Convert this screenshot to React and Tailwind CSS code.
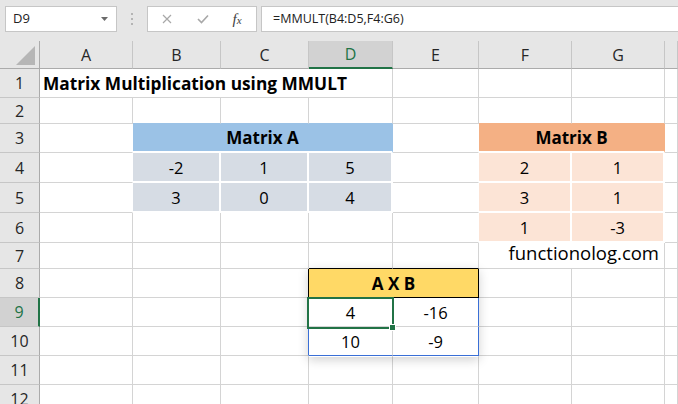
import React from "react";
import { twMerge } from "tailwind-merge";

// column widths include the right gridline
const W = {
  A: "w-[93px]",
  B: "w-[88px]",
  C: "w-[88px]",
  D: "w-[84px]",
  E: "w-[86px]",
  F: "w-[93px]",
  G: "w-[93px]",
  H: "flex-1",
};

const cellFont = "font-['Open_Sans',sans-serif]";

export default function App() {
  return (
    <div className="w-[678px] h-[404px] overflow-hidden bg-white text-black font-['Open_Sans',sans-serif] select-none">
      <FormulaBar />

      <div className="relative">
        <ColumnHeader />

        <Row h="h-[29px]" n={1}>
          <Cell className="w-[353px] items-center justify-start pl-[3px] pt-[1px] font-bold text-[17.3px]">
            Matrix Multiplication using MMULT
          </Cell>
          {blank("EFGH")}
        </Row>

        <Row h="h-[26px]" n={2}>
          {blank("ABCDEFGH", { B: "border-b-[#9bc2e6]", C: "border-b-[#9bc2e6]", D: "border-b-[#9bc2e6]", F: "border-b-[#f4b084]", G: "border-b-[#f4b084]" })}
        </Row>

        <Row h="h-[29px]" n={3}>
          <Cell className="w-[93px] border-r-white" />
          <Cell className="w-[260px] items-center bg-[#9bc2e6] border-r-[#9bc2e6] border-b-white border-b-2 font-bold text-[17px] pt-[1px]">
            Matrix A
          </Cell>
          <Cell className="w-[86px] border-r-white" />
          <Cell className="w-[186px] items-center bg-[#f4b084] border-r-[#f4b084] border-b-white border-b-2 font-bold text-[17px] pt-[1px]">
            Matrix B
          </Cell>
          <Cell className="flex-1" />
        </Row>

        <Row h="h-[30px]" n={4}>
          <Cell className="w-[93px] border-r-white" />
          <Num w="B" v="-2" tone="a" />
          <Num w="C" v="1" tone="a" />
          <Num w="D" v="5" tone="a" />
          <Cell className="w-[86px] border-r-white" />
          <Num w="F" v="2" tone="b" />
          <Num w="G" v="1" tone="b" />
          <Cell className="flex-1" />
        </Row>

        <Row h="h-[30px]" n={5}>
          <Cell className="w-[93px] border-r-white" />
          <Num w="B" v="3" tone="a" />
          <Num w="C" v="0" tone="a" />
          <Num w="D" v="4" tone="a" />
          <Cell className="w-[86px] border-r-white" />
          <Num w="F" v="3" tone="b" />
          <Num w="G" v="1" tone="b" />
          <Cell className="flex-1" />
        </Row>

        <Row h="h-[30px]" n={6}>
          {blank("ABCD")}
          <Cell className="w-[86px] border-r-white" />
          <Num w="F" v="1" tone="b" />
          <Num w="G" v="-3" tone="b" />
          <Cell className="flex-1" />
        </Row>

        <Row h="h-[26px]" n={7}>
          {blank("ABC")}
          <Cell className="w-[84px] border-b-black" />
          <Cell className="w-[86px] border-b-black" />
          <Cell className="w-[186px] justify-end pr-[5px] pb-[1px] text-[18.5px]">functionolog.com</Cell>
          <Cell className="flex-1" />
        </Row>

        <Row h="h-[29px]" n={8}>
          {blank("AB")}
          <Cell className="w-[88px] border-r-black" />
          <Cell className="w-[170px] items-center bg-[#ffd966] border-r-black border-b-black font-bold text-[17px] pt-[1px]">
            A X B
          </Cell>
          {blank("FGH")}
        </Row>

        <Row h="h-[29px]" n={9} sel>
          {blank("AB")}
          <Cell className="w-[88px] border-r-[#3a6fd6]" />
          <Cell className="w-[84px] text-[16.5px]">4</Cell>
          <Cell className="w-[86px] border-r-[#3a6fd6] text-[16.5px]">-16</Cell>
          {blank("FGH")}
        </Row>

        <Row h="h-[29px]" n={10}>
          {blank("AB")}
          <Cell className="w-[88px] border-r-[#3a6fd6]" />
          <Cell className="w-[84px] border-b-[#3a6fd6] text-[16.5px]">10</Cell>
          <Cell className="w-[86px] border-r-[#3a6fd6] border-b-[#3a6fd6] text-[16.5px]">-9</Cell>
          {blank("FGH")}
        </Row>

        <Row h="h-[29px]" n={11}>{blank("ABCDEFGH")}</Row>
        <Row h="h-[29px]" n={12}>{blank("ABCDEFGH")}</Row>

        {/* soft shadow round the result block */}
        <div className="pointer-events-none absolute left-[308px] top-[227px] w-[171px] h-[89px] shadow-[0_3px_10px_rgba(0,0,0,0.18)]" />
        {/* active cell D9 */}
        <div className="pointer-events-none absolute left-[307px] top-[256px] w-[87px] h-[32px] border-2 border-[#217346]" />
        <div className="pointer-events-none absolute left-[389px] top-[283px] w-[7px] h-[7px] bg-[#217346] border border-white" />
      </div>
    </div>
  );
}

function FormulaBar() {
  return (
    <div className="h-[41px] bg-[#e6e6e6] flex items-start pt-[6px] pl-[5px] text-[13px] text-[#222] font-['Open_Sans',sans-serif]">
      <div className="w-[112px] h-[26px] shrink-0 bg-white border border-[#c6c6c6] flex items-center justify-between pl-[7px] pr-[8px]">
        <span>D9</span>
        <svg width="7" height="4" viewBox="0 0 7 4">
          <path d="M0 0h7L3.5 4z" fill="#6b6b6b" />
        </svg>
      </div>
      <div className="w-[30px] h-[26px] shrink-0 flex flex-col items-center justify-center gap-[3px]">
        <span className="w-[2px] h-[2px] bg-[#b4b4b4]" />
        <span className="w-[2px] h-[2px] bg-[#b4b4b4]" />
        <span className="w-[2px] h-[2px] bg-[#b4b4b4]" />
      </div>
      <div className="w-[110px] h-[26px] shrink-0 bg-white border border-[#c6c6c6] flex items-center">
        <div className="w-[38px] flex justify-center">
          <svg width="10" height="10" viewBox="0 0 10 10" stroke="#a8a8a8" strokeWidth="1.2">
            <path d="M1 1l8 8M9 1l-8 8" />
          </svg>
        </div>
        <div className="w-[34px] flex justify-center">
          <svg width="12" height="10" viewBox="0 0 12 10" fill="none" stroke="#a8a8a8" strokeWidth="1.6">
            <path d="M1 5l3.5 3.5L11 1.5" />
          </svg>
        </div>
        <div className="w-[34px] flex justify-center">
          <span className="italic font-['Liberation_Serif',serif] text-[15px] text-[#404040] leading-none">
            f<span className="text-[11px]">x</span>
          </span>
        </div>
      </div>
      <div className="ml-[4px] flex-1 h-[26px] bg-white border border-[#c6c6c6] border-r-0 flex items-center pl-[11px] text-[12.5px]">
        =MMULT(B4:D5,F4:G6)
      </div>
    </div>
  );
}

function ColumnHeader() {
  return (
    <div className="flex h-[28px] bg-[#e6e6e6] text-[16px]">
      <div className="w-[40px] shrink-0 h-full relative border-r border-b border-[#ababab]">
        <svg className="absolute right-[4px] bottom-[3px]" width="19" height="19" viewBox="0 0 19 19">
          <path d="M19 0V19H0z" fill="#b6b6b6" />
        </svg>
      </div>
      <ColHead w={W.A} label="A" />
      <ColHead w={W.B} label="B" />
      <ColHead w={W.C} label="C" />
      <ColHead w={W.D} label="D" sel />
      <ColHead w={W.E} label="E" />
      <ColHead w={W.F} label="F" />
      <ColHead w={W.G} label="G" />
      <ColHead w={W.H} label="" />
    </div>
  );
}

function ColHead({ w, label, sel }) {
  return (
    <div
      className={`${w} shrink-0 h-full flex items-center justify-center border-r border-r-[#c6c6c6] ${
        sel ? "bg-[#d2d2d2] text-[#217346] border-b-2 border-b-[#217346]" : "text-[#262626] border-b border-b-[#ababab]"
      }`}
    >
      {label}
    </div>
  );
}

function Row({ h, n, sel, children }) {
  return (
    <div className={`flex ${h}`}>
      <div
        className={`w-[40px] shrink-0 h-full flex items-center justify-center text-[16px] border-b border-b-[#c6c6c6] ${
          sel ? "bg-[#d2d2d2] text-[#217346] border-r-2 border-r-[#217346]" : "bg-[#e6e6e6] text-[#262626] border-r border-r-[#ababab]"
        }`}
      >
        {n}
      </div>
      {children}
    </div>
  );
}

function Cell({ className, children }) {
  return (
    <div
      className={twMerge(
        "shrink-0 h-full border-r border-b border-[#d4d4d4] flex items-end justify-center text-[16px] whitespace-nowrap",
        cellFont,
        className
      )}
    >
      {children}
    </div>
  );
}

function Num({ w, v, tone }) {
  const fill = tone === "a" ? "bg-[#d6dce4]" : "bg-[#fce4d6]";
  return <Cell className={twMerge(W[w], fill, "border-r-2 border-b-2 border-white text-[16.5px]")}>{v}</Cell>;
}

function blank(cols, extra = {}) {
  return cols.split("").map((c) => <Cell key={c} className={twMerge(W[c], extra[c])} />);
}
